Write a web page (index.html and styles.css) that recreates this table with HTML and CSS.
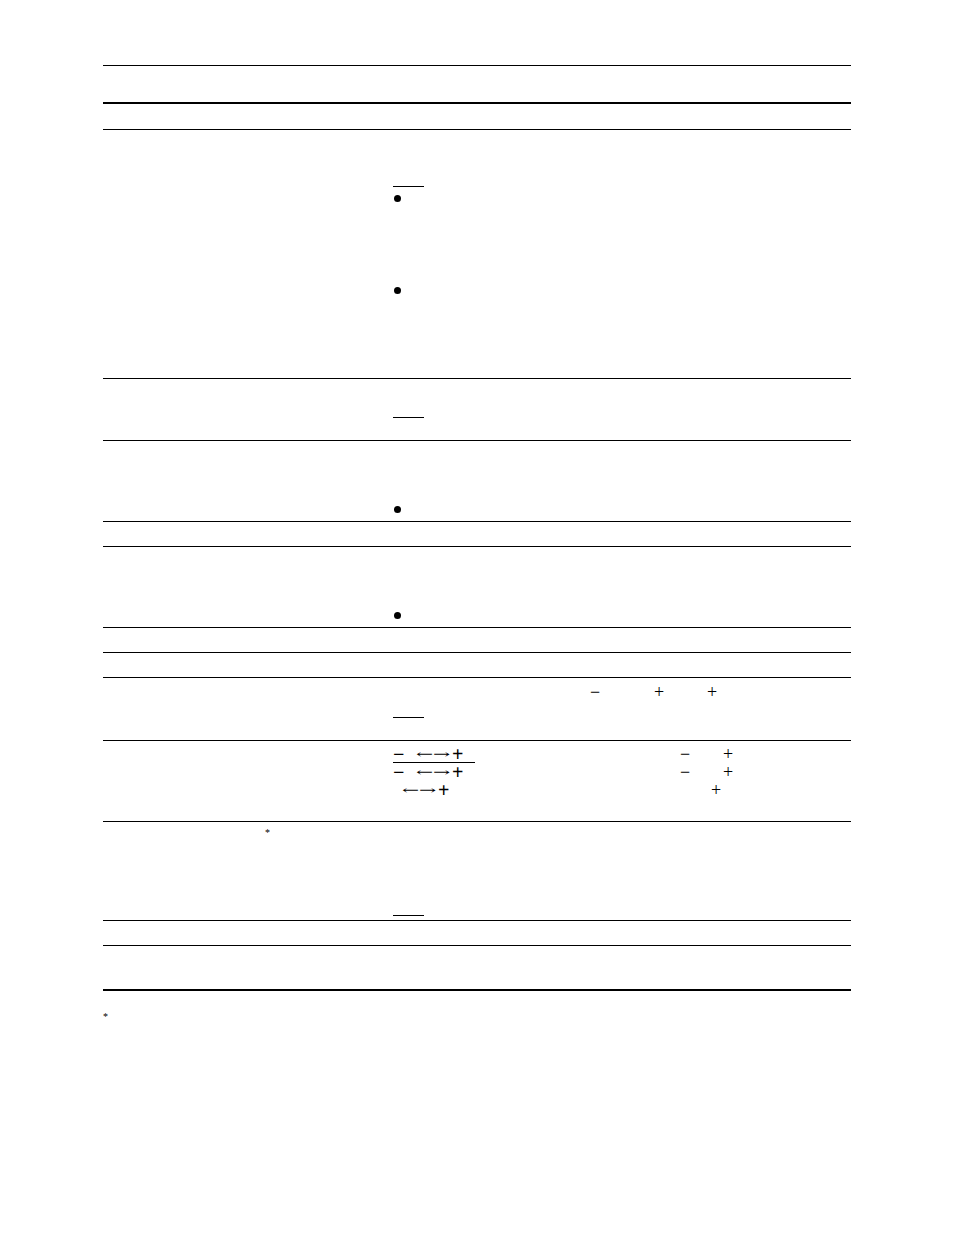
FILE: index.html
```html
<!DOCTYPE html>
<html>
<head>
<meta charset="utf-8">
<link rel="stylesheet" href="styles.css">
</head>
<body>
<div class="page">
  <div class="table">
    <div class="row r0 thick"><div class="lc"></div><div class="rc"></div></div>
    <div class="row r1"><div class="lc"></div><div class="rc"></div></div>
    <div class="row r2">
      <div class="lc"></div>
      <div class="rc">
        <div class="uline u-r2"></div>
        <div class="bullet b-r2a"></div>
        <div class="bullet b-r2b"></div>
      </div>
    </div>
    <div class="row r3">
      <div class="lc"></div>
      <div class="rc"><div class="uline u-r3"></div></div>
    </div>
    <div class="row r4">
      <div class="lc"></div>
      <div class="rc"><div class="bullet b-r4"></div></div>
    </div>
    <div class="row r5"><div class="lc"></div><div class="rc"></div></div>
    <div class="row r6">
      <div class="lc"></div>
      <div class="rc"><div class="bullet b-r4"></div></div>
    </div>
    <div class="row r5"><div class="lc"></div><div class="rc"></div></div>
    <div class="row r5"><div class="lc"></div><div class="rc"></div></div>
    <div class="row r9">
      <div class="lc"></div>
      <div class="rc">
        <div class="sline s-r9">
          <span class="sg m9a">−</span>
          <span class="sg m9b">+</span>
          <span class="sg m9c">+</span>
        </div>
        <div class="uline u-r9"></div>
      </div>
    </div>
    <div class="row r10">
      <div class="lc"></div>
      <div class="rc">
        <div class="sline s-r10a">
          <span class="grp"><span class="bminus">−</span><span class="arr">←→</span><span class="bplus">+</span></span>
          <span class="sg">−</span><span class="sg m10p">+</span>
        </div>
        <div class="uline wide"></div>
        <div class="sline s-r10b">
          <span class="grp"><span class="bminus">−</span><span class="arr">←→</span><span class="bplus">+</span></span>
          <span class="sg">−</span><span class="sg m10p">+</span>
        </div>
        <div class="sline s-r10c">
          <span class="grp"><span class="arr arr-ind">←→</span><span class="bplus">+</span></span>
          <span class="sg m10q">+</span>
        </div>
      </div>
    </div>
    <div class="row r11">
      <div class="lc"><span class="ast ast-r11">*</span></div>
      <div class="rc"><div class="uline u-r11"></div></div>
    </div>
    <div class="row r5"><div class="lc"></div><div class="rc"></div></div>
    <div class="row r13 thick"><div class="lc"></div><div class="rc"></div></div>
  </div>
  <div class="foot"><span class="ast">*</span></div>
</div>
</body>
</html>
```
FILE: styles.css
```css
html, body {
  margin: 0;
  padding: 0;
  background: #fff;
}
body {
  font-family: "Liberation Serif", "Times New Roman", serif;
  color: #000;
}
.page {
  padding-top: 65px;
  padding-left: 103px;
  width: 748px;
}
.table {
  border-top: 1px solid #000;
}
.row {
  display: flex;
  border-bottom: 1px solid #000;
}
.row.thick {
  border-bottom-width: 2px;
}
.lc {
  width: 290px;
  flex: none;
}
.rc {
  flex: 1;
  display: flex;
  flex-direction: column;
  align-items: flex-start;
}
.r0 { height: 36px; }
.r1 { height: 25px; }
.r2 { height: 248px; }
.r3 { height: 61px; }
.r4 { height: 80px; }
.r5 { height: 24px; }
.r6 { height: 80px; }
.r9 { height: 62px; }
.r10 { height: 80px; }
.r11 { height: 98px; }
.r13 { height: 43px; }

.uline {
  width: 31px;
  height: 1px;
  background: #000;
}
.uline.wide {
  width: 82px;
}
.bullet {
  width: 7px;
  height: 7px;
  border-radius: 50%;
  background: #000;
  margin-left: 1px;
}
.u-r2 { margin-top: 56px; }
.b-r2a { margin-top: 8px; }
.b-r2b { margin-top: 85px; }
.u-r3 { margin-top: 38px; }
.b-r4 { margin-top: 65px; }
.u-r9 { margin-top: 17px; }
.u-r11 { margin-top: 93px; }

.sline {
  display: flex;
  align-items: center;
  height: 16px;
  font-size: 18px;
  line-height: 15px;
  white-space: nowrap;
}
.s-r9 { margin-top: 6px; }
.s-r10a { margin-top: 6px; height: 15px; }
.s-r10b { height: 17px; margin-top: 1px; }
.s-r10c { height: 18px; }
.sg {
  display: inline-block;
  width: 12px;
  text-align: center;
}
.m9a { margin-left: 196px; }
.m9b { margin-left: 52px; }
.m9c { margin-left: 41px; }
.grp {
  display: inline-flex;
  align-items: center;
  width: 286px;
}
.bminus {
  display: inline-block;
  width: 23px;
  font-size: 20px;
  font-weight: bold;
  line-height: 15px;
}
.arr {
  font-family: "DejaVu Serif", serif;
  font-size: 12px;
  line-height: 15px;
  display: inline-block;
  width: 36px;
  transform: scaleX(1.7);
  transform-origin: left center;
}
.arr-ind {
  margin-left: 9px;
}
.bplus {
  font-size: 20px;
  font-weight: bold;
  line-height: 15px;
}
.m10p { margin-left: 31px; }
.m10q { margin-left: 31px; }

.ast {
  font-size: 10px;
  line-height: 10px;
}
.lc .ast-r11 {
  display: inline-block;
  margin-left: 162px;
  margin-top: 4px;
}
.foot {
  margin-top: 15px;
  height: 12px;
}
```
